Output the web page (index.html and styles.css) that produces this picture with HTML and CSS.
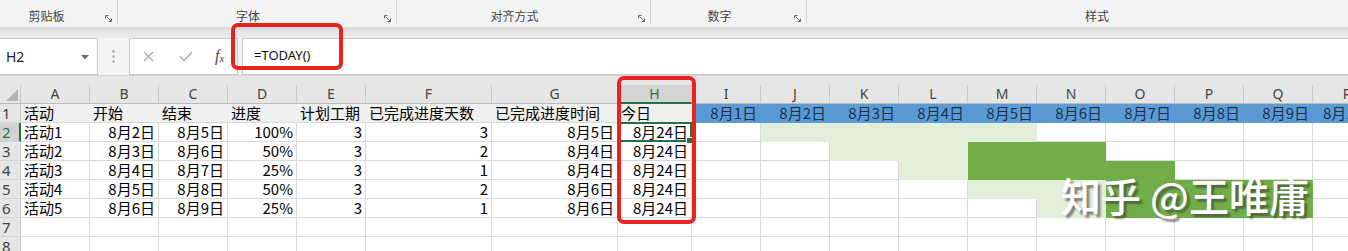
FILE: index.html
```html
<!DOCTYPE html>
<html lang="zh-CN">
<head>
    <meta charset="UTF-8">
    <meta name="viewport" content="width=device-width, initial-scale=1.0">
    <title>甘特图 - Excel</title>
    <link rel="stylesheet" href="styles.css">
</head>
<body>
    <!-- 功能区 分组标签 -->
    <div class="ribbon">
        <div class="group g-clip">
            <span class="label">剪贴板</span>
            <span class="launch"><svg width="8" height="8" viewBox="0 0 8 8"><path d="M0.5 3.5V0.5H3.5M1.5 1.5L6.5 6.5M6.5 3.5V6.5H3.5" fill="none" stroke="#6a6a6a" stroke-width="1"/></svg></span>
        </div>
        <div class="group g-font">
            <span class="label">字体</span>
            <span class="launch"><svg width="8" height="8" viewBox="0 0 8 8"><path d="M0.5 3.5V0.5H3.5M1.5 1.5L6.5 6.5M6.5 3.5V6.5H3.5" fill="none" stroke="#6a6a6a" stroke-width="1"/></svg></span>
        </div>
        <div class="group g-align">
            <span class="label">对齐方式</span>
            <span class="launch"><svg width="8" height="8" viewBox="0 0 8 8"><path d="M0.5 3.5V0.5H3.5M1.5 1.5L6.5 6.5M6.5 3.5V6.5H3.5" fill="none" stroke="#6a6a6a" stroke-width="1"/></svg></span>
        </div>
        <div class="group g-num">
            <span class="label">数字</span>
            <span class="launch"><svg width="8" height="8" viewBox="0 0 8 8"><path d="M0.5 3.5V0.5H3.5M1.5 1.5L6.5 6.5M6.5 3.5V6.5H3.5" fill="none" stroke="#6a6a6a" stroke-width="1"/></svg></span>
        </div>
        <div class="group g-style">
            <span class="label">样式</span>
        </div>
    </div><!-- ribbon -->
    <div class="ribbon-edge"></div>

    <!-- 编辑栏 -->
    <div class="fbar">
        <div class="namebox">
            <span>H2</span>
            <svg class="drop" width="8" height="5" viewBox="0 0 8 5"><path d="M0 0H8L4 4.5Z" fill="#6b6b6b"/></svg>
        </div>
        <div class="grip">
            <svg width="3" height="13" viewBox="0 0 3 13"><circle cx="1.5" cy="1.5" r="1.2" fill="#a6a6a6"/><circle cx="1.5" cy="6.5" r="1.2" fill="#a6a6a6"/><circle cx="1.5" cy="11.5" r="1.2" fill="#a6a6a6"/></svg>
        </div>
        <div class="fbtns">
            <svg class="cancel" width="11" height="11" viewBox="0 0 11 11"><path d="M1 1L10 10M10 1L1 10" stroke="#a8a8a8" stroke-width="1.3"/></svg>
            <svg class="enter" width="14" height="11" viewBox="0 0 14 11"><path d="M1 5.5L5 9.5L13 1" fill="none" stroke="#a8a8a8" stroke-width="1.5"/></svg>
            <span class="fx">f<sub>x</sub></span>
        </div>
        <div class="finput">=TODAY()</div>
    </div><!-- fbar -->

    <!-- 工作表 -->
    <div class="sheet-wrap">
        <div class="sheet">
            <div class="ch corner"><svg width="12" height="12" viewBox="0 0 12 12"><path d="M12 0V12H0Z" fill="#b5b5b5"/></svg></div>
            <div class="ch">A</div><div class="ch">B</div><div class="ch">C</div><div class="ch">D</div>
            <div class="ch">E</div><div class="ch">F</div><div class="ch">G</div><div class="ch on">H</div>
            <div class="ch">I</div><div class="ch">J</div><div class="ch">K</div><div class="ch">L</div>
            <div class="ch">M</div><div class="ch">N</div><div class="ch">O</div><div class="ch">P</div>
            <div class="ch">Q</div><div class="ch">R</div>

            <!-- 1 -->
            <div class="rh">1</div>
            <div class="c hd">活动</div><div class="c hd">开始</div><div class="c hd">结束</div><div class="c hd">进度</div>
            <div class="c hd">计划工期</div><div class="c hd">已完成进度天数</div><div class="c hd">已完成进度时间</div><div class="c hd">今日</div>
            <div class="c r bl">8月1日</div><div class="c r bl">8月2日</div><div class="c r bl">8月3日</div><div class="c r bl">8月4日</div>
            <div class="c r bl">8月5日</div><div class="c r bl">8月6日</div><div class="c r bl">8月7日</div><div class="c r bl">8月8日</div>
            <div class="c r bl">8月9日</div><div class="c r bl">8月10日</div>

            <!-- 2 -->
            <div class="rh on">2</div>
            <div class="c">活动1</div><div class="c r">8月2日</div><div class="c r">8月5日</div><div class="c r">100%</div>
            <div class="c r">3</div><div class="c r">3</div><div class="c r">8月5日</div><div class="c r sel">8月24日</div>
            <div class="c"></div><div class="c lg"></div><div class="c lg"></div><div class="c lg"></div>
            <div class="c lg"></div><div class="c"></div><div class="c"></div><div class="c"></div>
            <div class="c"></div><div class="c"></div>

            <!-- 3 -->
            <div class="rh">3</div>
            <div class="c">活动2</div><div class="c r">8月3日</div><div class="c r">8月6日</div><div class="c r">50%</div>
            <div class="c r">3</div><div class="c r">2</div><div class="c r">8月4日</div><div class="c r">8月24日</div>
            <div class="c"></div><div class="c"></div><div class="c lg"></div><div class="c lg"></div>
            <div class="c dg"></div><div class="c dg"></div><div class="c"></div><div class="c"></div>
            <div class="c"></div><div class="c"></div>

            <!-- 4 -->
            <div class="rh">4</div>
            <div class="c">活动3</div><div class="c r">8月4日</div><div class="c r">8月7日</div><div class="c r">25%</div>
            <div class="c r">3</div><div class="c r">1</div><div class="c r">8月4日</div><div class="c r">8月24日</div>
            <div class="c"></div><div class="c"></div><div class="c"></div><div class="c lg"></div>
            <div class="c dg"></div><div class="c dg"></div><div class="c dg"></div><div class="c"></div>
            <div class="c"></div><div class="c"></div>

            <!-- 5 -->
            <div class="rh">5</div>
            <div class="c">活动4</div><div class="c r">8月5日</div><div class="c r">8月8日</div><div class="c r">50%</div>
            <div class="c r">3</div><div class="c r">2</div><div class="c r">8月6日</div><div class="c r">8月24日</div>
            <div class="c"></div><div class="c"></div><div class="c"></div><div class="c"></div>
            <div class="c lg"></div><div class="c lg"></div><div class="c dg"></div><div class="c dg"></div>
            <div class="c dg"></div><div class="c"></div>

            <!-- 6 -->
            <div class="rh">6</div>
            <div class="c">活动5</div><div class="c r">8月6日</div><div class="c r">8月9日</div><div class="c r">25%</div>
            <div class="c r">3</div><div class="c r">1</div><div class="c r">8月6日</div><div class="c r">8月24日</div>
            <div class="c"></div><div class="c"></div><div class="c"></div><div class="c"></div>
            <div class="c"></div><div class="c lg"></div><div class="c dg"></div><div class="c dg"></div>
            <div class="c dg"></div><div class="c"></div>

            <!-- 7 -->
            <div class="rh">7</div>
            <div class="c"></div><div class="c"></div><div class="c"></div><div class="c"></div>
            <div class="c"></div><div class="c"></div><div class="c"></div><div class="c"></div>
            <div class="c"></div><div class="c"></div><div class="c"></div><div class="c"></div>
            <div class="c"></div><div class="c"></div><div class="c"></div><div class="c"></div>
            <div class="c"></div><div class="c"></div>

            <!-- 8 -->
            <div class="rh">8</div>
            <div class="c"></div><div class="c"></div><div class="c"></div><div class="c"></div>
            <div class="c"></div><div class="c"></div><div class="c"></div><div class="c"></div>
            <div class="c"></div><div class="c"></div><div class="c"></div><div class="c"></div>
            <div class="c"></div><div class="c"></div><div class="c"></div><div class="c"></div>
            <div class="c"></div><div class="c"></div>
        </div><!-- sheet -->
    </div><!-- sheet-wrap -->

    <!-- 标注 -->
    <div class="mark mark-formula"></div>
    <div class="mark mark-col"></div>
    <div class="watermark">知乎 @王唯庸</div>
</body>
</html>
```

FILE: styles.css
```css
*{
    box-sizing: border-box;
}
html, body{
    margin: 0;
    width: 100%;
    height: 100%;
    overflow: hidden;
}
body{
    position: relative;
    background: #fff;
    font-family: "Noto Sans CJK SC", "Noto Sans", sans-serif;
    color: #000;
}

/* ribbon */
.ribbon{
    display: flex;
    height: 27px;
    background: #f3f3f3;
    overflow: hidden;
}
.group{
    display: flex;
    align-items: flex-start;
    flex-shrink: 0;
    height: 24px;
    padding-top: 8px;
    border-right: 1px solid #d6d6d6;
}
.group .label{
    flex: 1;
    text-align: center;
    font-size: 12px;
    line-height: 16px;
    color: #444;
}
.group .launch{
    width: 18px;
    padding: 7px 0 0 6px;
    line-height: 0;
}
.g-clip{ width: 118px; }
.g-clip .label{ padding-right: 6px; }
.g-font{ width: 279px; }
.g-align{ width: 254px; }
.g-num{ width: 156px; }
.g-style{
    width: 541px;
    padding-left: 39px;
    border-right: none;
}
.ribbon-edge{
    height: 11px;
    background: linear-gradient(#dadada, #e4e4e4 40%, #ececec);
}

/* formula bar */
.fbar{
    display: flex;
    height: 38px;
    background: #f4f4f4;
    border-bottom: 1px solid #d4d4d4;
}
.namebox{
    display: flex;
    align-items: center;
    justify-content: space-between;
    width: 99px;
    margin-left: -1px;
    padding: 0 8px 0 6px;
    background: #fff;
    border: 1px solid #c8c8c8;
    font-family: "Noto Sans", sans-serif;
    font-size: 14px;
    color: #222;
}
.namebox .drop{
    margin-top: 1px;
}
.grip{
    display: flex;
    align-items: center;
    justify-content: center;
    width: 31px;
}
.fbtns{
    display: flex;
    align-items: center;
    width: 109px;
    padding-left: 13px;
    background: #fff;
    border: 1px solid #c8c8c8;
}
.fbtns .enter{
    margin-left: 25px;
}
.fbtns .fx{
    margin-left: 22px;
    font-family: "Liberation Serif", serif;
    font-style: italic;
    font-size: 16px;
    line-height: 16px;
    color: #4a4a4a;
}
.fbtns .fx sub{
    font-size: 11px;
    vertical-align: -1px;
}
.finput{
    flex: 1;
    padding: 7px 0 0 11px;
    margin-left: 4px;
    background: #fff;
    border: 1px solid #c8c8c8;
    border-right: none;
    font-family: "Noto Sans", sans-serif;
    font-size: 13px;
    line-height: 18px;
    color: #111;
}

/* sheet */
.sheet-wrap{
    height: 175px;
    padding-top: 9px;
    background: #e6e6e6;
    overflow: hidden;
}
.sheet{
    display: grid;
    grid-template-columns: 21px repeat(5, 69px) 126px 126px 74px repeat(10, 69px);
    grid-auto-rows: 19px;
    background: #fff;
}
.ch{
    background: #e6e6e6;
    border-right: 1px solid #c9c9c9;
    border-bottom: 1px solid #bdbdbd;
    text-align: center;
    font-family: "Noto Sans", sans-serif;
    font-size: 14px;
    line-height: 18px;
    color: #444;
}
.ch.corner{
    display: flex;
    align-items: flex-end;
    justify-content: flex-end;
    padding: 0 2px 2px 0;
}
.ch.on{
    background: #d3d3d3;
    color: #217346;
    border-bottom: 2px solid #217346;
}
.rh{
    background: #e6e6e6;
    border-right: 1px solid #c9c9c9;
    border-bottom: 1px solid #d4d4d4;
    padding-left: 2px;
    font-family: "Noto Sans", sans-serif;
    font-size: 15px;
    line-height: 18px;
    color: #444;
}
.rh.on{
    background: #d3d3d3;
    color: #217346;
    border-right: 2px solid #217346;
}
.c{
    position: relative;
    padding: 0 3px;
    border-right: 1px solid #d9d9d9;
    border-bottom: 1px solid #d9d9d9;
    font-size: 15px;
    line-height: 18px;
    white-space: nowrap;
}
.c.r{
    text-align: right;
}
.c.hd{
    background: #f0f0f0;
    border-right-color: #f0f0f0;
}
.c.bl{
    background: #5b9bd5;
    border-color: #5b9bd5;
    color: #1d2f4f;
}
.c.lg{
    background: #e2efda;
    border-color: #e2efda;
}
.c.dg{
    background: #70ad47;
    border-color: #70ad47;
}
.c.sel::after{
    content: "";
    position: absolute;
    left: -1px;
    top: -1px;
    right: -1px;
    bottom: -1px;
    border: 2px solid #217346;
}
.c.sel::before{
    content: "";
    position: absolute;
    right: -2px;
    bottom: -3px;
    width: 5px;
    height: 5px;
    background: #217346;
    border: 1px solid #fff;
    z-index: 1;
}

/* annotations */
.mark{
    position: absolute;
    border: 4px solid #e8221d;
    border-radius: 7px;
    z-index: 5;
}
.mark-formula{
    left: 231px;
    top: 23px;
    width: 112px;
    height: 47px;
}
.mark-col{
    left: 617px;
    top: 76px;
    width: 79px;
    height: 148px;
}
.watermark{
    position: absolute;
    left: 1061px;
    top: 175px;
    font-size: 40px;
    font-weight: 500;
    line-height: 1;
    color: #fff;
    white-space: nowrap;
    text-shadow: 3px 3px 2px rgba(60, 60, 60, 0.6);
    z-index: 6;
}
```
